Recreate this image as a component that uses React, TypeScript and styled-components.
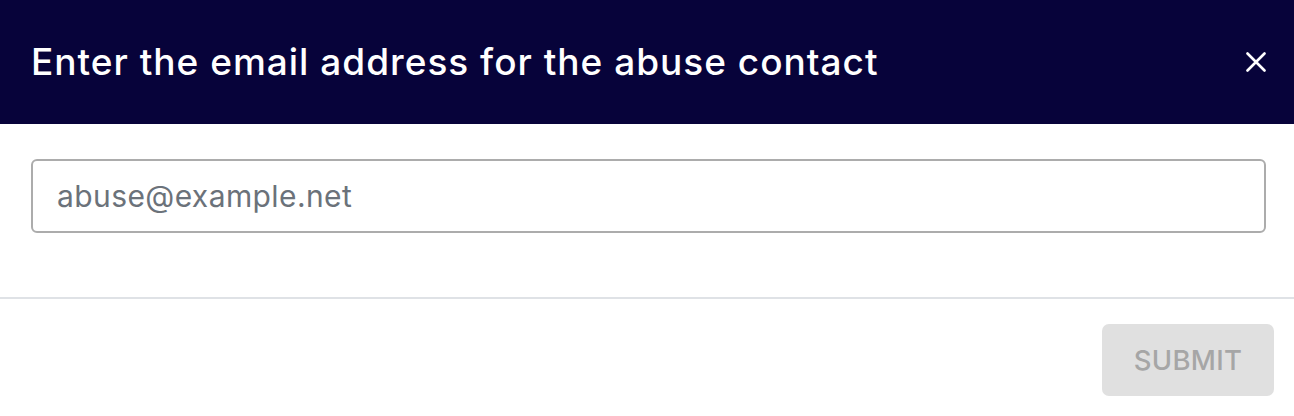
import React from "react";
import styled, { createGlobalStyle } from "styled-components";

const Global = createGlobalStyle`
  html, body { margin: 0; padding: 0; background: #fff; }
  body { font-family: Inter, "Noto Sans", sans-serif; }
  * { box-sizing: border-box; }
`;

const Modal = styled.div`
  width: 1294px;
  height: 416px;
  display: flex;
  flex-direction: column;
  background: #fff;
`;

const Header = styled.header`
  height: 124px;
  background: #07033a;
  display: flex;
  align-items: center;
  justify-content: space-between;
  padding: 0 28px 0 31px;
`;

const Title = styled.h1`
  margin: 0;
  color: #fff;
  font-size: 37px;
  font-weight: 500;
  letter-spacing: 1px;
  padding-bottom: 2px;
`;

const CloseButton = styled.button`
  border: none;
  background: transparent;
  padding: 0;
  width: 20px;
  height: 20px;
  display: flex;
  align-items: center;
  justify-content: center;
  cursor: pointer;
`;

const Body = styled.div`
  padding: 35px 28px 64px 31px;
  border-bottom: 2px solid #dfe2e6;
`;

const Input = styled.input`
  width: 100%;
  height: 74px;
  border: 2px solid #acacac;
  border-radius: 6px;
  padding: 0 24px;
  font-family: Inter, "Noto Sans", sans-serif;
  font-size: 30px;
  letter-spacing: 0.4px;
  color: #333;
  outline: none;
  &::placeholder { color: #6b727a; }
`;

const Footer = styled.footer`
  display: flex;
  justify-content: flex-end;
  padding: 25px 20px 20px;
`;

const SubmitButton = styled.button`
  width: 172px;
  height: 72px;
  border: none;
  border-radius: 7px;
  background: #e0e0e0;
  color: #a6a6a6;
  font-family: Inter, "Noto Sans", sans-serif;
  font-size: 27.5px;
  font-weight: 500;
  letter-spacing: 0.3px;
`;

export default function App() {
  return (
    <>
      <Global />
      <Modal>
        <Header>
          <Title>Enter the email address for the abuse contact</Title>
          <CloseButton aria-label="Close">
            <svg width="20" height="20" viewBox="0 0 20 20">
              <path d="M1.5 1.5 L18.5 18.5 M18.5 1.5 L1.5 18.5" stroke="#fff" strokeWidth="2.6" strokeLinecap="round" />
            </svg>
          </CloseButton>
        </Header>
        <Body>
          <Input placeholder="abuse@example.net" />
        </Body>
        <Footer>
          <SubmitButton disabled>SUBMIT</SubmitButton>
        </Footer>
      </Modal>
    </>
  );
}
